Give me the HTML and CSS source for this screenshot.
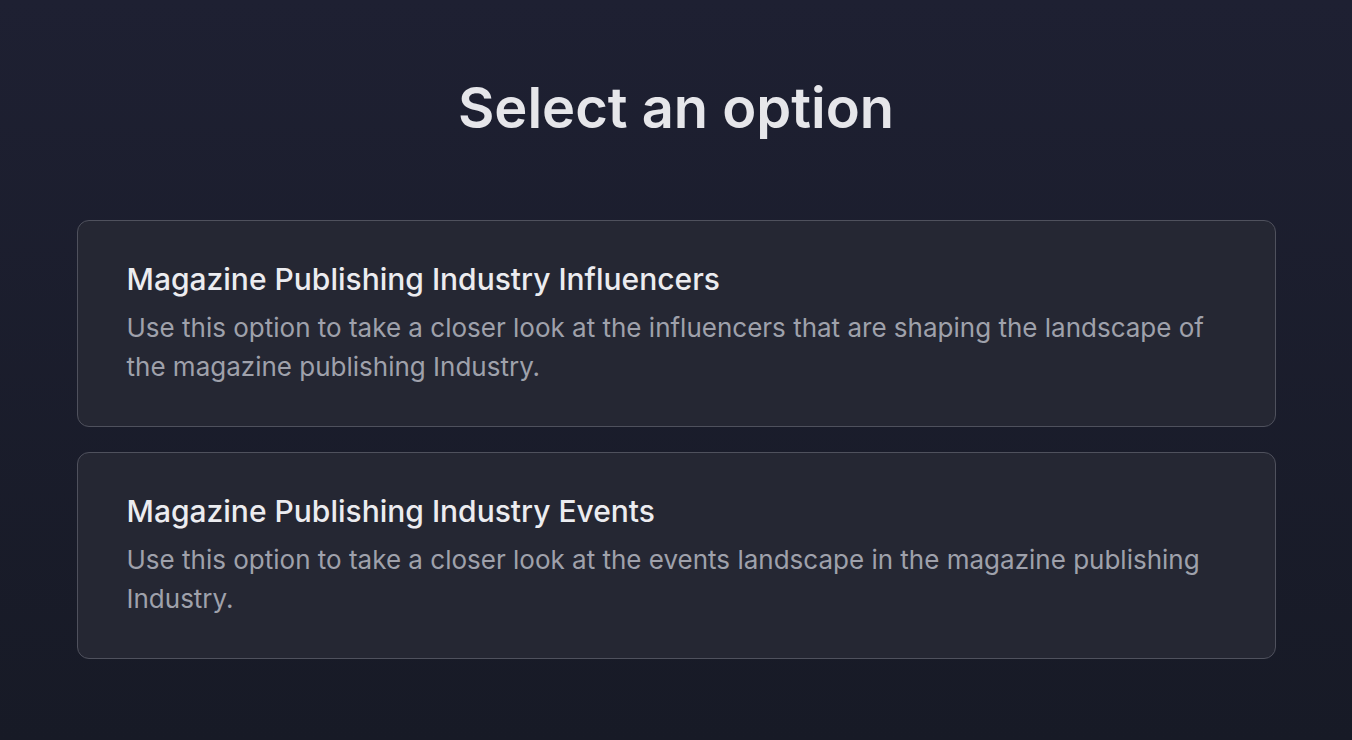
FILE: index.html
```html
<!DOCTYPE html>
<html lang="en">
<head>
<meta charset="utf-8">
<title>Select an option</title>
<link rel="stylesheet" href="styles.css">
</head>
<body>
<main class="page">
  <h1 class="heading">Select an option</h1>
  <div class="options">
    <div class="card">
      <h2 class="card-title">Magazine Publishing Industry Influencers</h2>
      <p class="card-desc">Use this option to take a closer look at the influencers that are shaping the landscape of the magazine publishing Industry.</p>
    </div>
    <div class="card">
      <h2 class="card-title">Magazine Publishing Industry Events</h2>
      <p class="card-desc">Use this option to take a closer look at the events landscape in the magazine publishing Industry.</p>
    </div>
  </div>
</main>
</body>
</html>
```
FILE: styles.css
```css
html, body {
  margin: 0;
  padding: 0;
  height: 100%;
}
body {
  background: linear-gradient(180deg, #1e2032 0%, #171a26 100%);
  font-family: Inter, "Noto Sans", sans-serif;
  color: #e8e8ec;
}
.page {
  padding: 76px 76px 0;
  display: flex;
  flex-direction: column;
  align-items: center;
}
.heading {
  margin: 0;
  font-size: 56px;
  font-weight: 600;
  line-height: 64px;
  color: #e6e6ea;
}
.options {
  margin-top: 80px;
  width: 1199px;
  display: flex;
  flex-direction: column;
  gap: 25px;
}
.card {
  background: #252733;
  border: 1px solid #4f515d;
  border-radius: 12px;
  padding: 40px 48px 40px 49px;
}
.card-title {
  margin: 0 0 11px;
  font-size: 30px;
  line-height: 36px;
  font-weight: 500;
  color: #ececf0;
}
.card-desc {
  margin: 0;
  font-size: 26px;
  line-height: 39px;
  color: #9fa1ab;
}
```
